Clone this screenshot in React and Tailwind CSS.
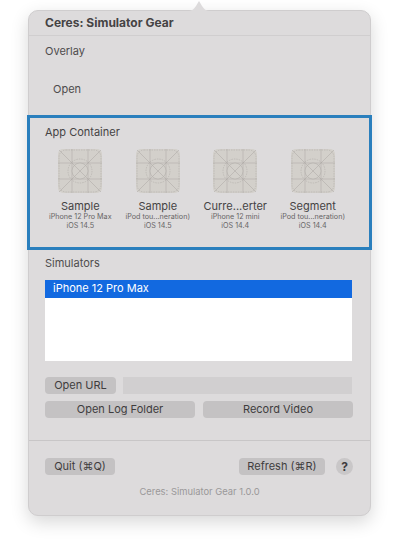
const apps = [
  { name: "Sample", device: "iPhone 12 Pro Max", os: "iOS 14.5" },
  { name: "Sample", device: "iPod tou...neration)", os: "iOS 14.5" },
  { name: "Curre...erter", device: "iPhone 12 mini", os: "iOS 14.4" },
  { name: "Segment", device: "iPod tou...neration)", os: "iOS 14.4" },
];

// the blank app icon template macOS shows for apps without an icon
const AppIcon = () => (
  <svg width="44" height="44" viewBox="0 0 44 44" fill="none" stroke="#aaa6a2" strokeWidth="0.5">
    <rect x="0" y="0" width="44" height="44" rx="5" fill="#d3d0cb" stroke="none" />
    <rect x="1" y="1" width="42" height="42" rx="7" strokeDasharray="1.5 1" />
    <path d="M0 14H44M0 30H44M14 0V44M30 0V44" />
    <path d="M1 1L43 43M43 1L1 43" />
    <circle cx="22" cy="22" r="12" strokeDasharray="1.5 1" />
    <circle cx="22" cy="22" r="8" fill="#d3d0cb" />
    <path d="M16.3 16.3L27.7 27.7M27.7 16.3L16.3 27.7" />
  </svg>
);

const Button = ({ className = "", children }) => (
  <button className={`h-[17px] rounded-[4px] bg-[#c4c2c3] pb-[1px] text-[11px] leading-[16px] text-[#3f3d3e] ${className}`}>
    {children}
  </button>
);

export default function App() {
  return (
    <div className="h-[552px] w-[400px] bg-white pt-[10px] pl-[28px] font-['Inter','Liberation_Sans',sans-serif]">
      <div className="relative flex h-[506px] w-[343px] flex-col rounded-[10px] border border-[#cfcdce] bg-[#dddbdc] shadow-[0_6px_18px_rgba(0,0,0,0.16)]">
        <svg className="absolute top-[-11px] left-[158px]" width="24" height="11" viewBox="0 0 24 11" fill="#dddbdc">
          <path d="M0 11C5 11 7 9 9 6L12 1L15 6C17 9 19 11 24 11Z" />
        </svg>

        <div className="flex h-[25px] items-center border-b border-[#d0cecf] pb-[1px] pl-[16px] text-[12px] font-bold text-[#454344]">
          Ceres: Simulator Gear
        </div>

        <div className="flex h-[79px] flex-col pl-[16px] text-[11px] text-[#4e4c4d]">
          <div className="pt-[8px] leading-[14px]">Overlay</div>
          <div className="pt-[24px] pl-[8px] leading-[14px]">Open</div>
        </div>

        <div className="mx-[-2px] h-[135px] border-[3px] border-[#2a7fbd] pt-[7px] pl-[15px]">
          <div className="text-[11px] leading-[14px] text-[#454344]">App Container</div>
          <div className="mt-[10px] ml-[-3.5px] flex">
            {apps.map((app, i) => (
              <div key={i} className="flex w-[77.5px] flex-col items-center text-center">
                <AppIcon />
                <div className="mt-[7px] text-[11px] leading-[13px] text-[#454344]">{app.name}</div>
                <div className="text-[7.2px] leading-[8.5px] text-[#666465]">{app.device}</div>
                <div className="text-[7.2px] leading-[8.5px] text-[#666465]">{app.os}</div>
              </div>
            ))}
          </div>
        </div>

        <div className="flex flex-1 flex-col pr-[17px] pl-[16px]">
          <div className="mt-[6px] text-[11px] leading-[14px] text-[#4e4c4d]">Simulators</div>
          <div className="mt-[10px] h-[81px] w-[307px] bg-white">
            <div className="h-[18px] bg-[#1269e0] pl-[8px] text-[11px] leading-[17px] text-white">iPhone 12 Pro Max</div>
          </div>

          <div className="mt-[16px] flex gap-[7px]">
            <Button className="w-[71px]">Open URL</Button>
            <div className="h-[17px] w-[229px] bg-[#d1cfd0]" />
          </div>
          <div className="mt-[7px] flex gap-[8px]">
            <Button className="w-[150px]">Open Log Folder</Button>
            <Button className="w-[150px]">Record Video</Button>
          </div>
        </div>

        <div className="flex h-[75px] flex-col border-t border-[#c8c6c7] pt-[17px] pr-[16px] pl-[16px]">
          <div className="flex items-center">
            <Button className="w-[70px]">Quit (⌘Q)</Button>
            <Button className="ml-auto w-[86px]">Refresh (⌘R)</Button>
            <div className="mr-[1px] ml-[11px] h-[17px] w-[17px] shrink-0 rounded-full bg-[#c9c7c8] text-center text-[12px] leading-[17px] font-bold text-[#3f3d3e]">?</div>
          </div>
          <div className="mt-[11px] text-center text-[9.4px] leading-[12px] text-[#9a9899]">Ceres: Simulator Gear 1.0.0</div>
        </div>
      </div>
    </div>
  );
}
